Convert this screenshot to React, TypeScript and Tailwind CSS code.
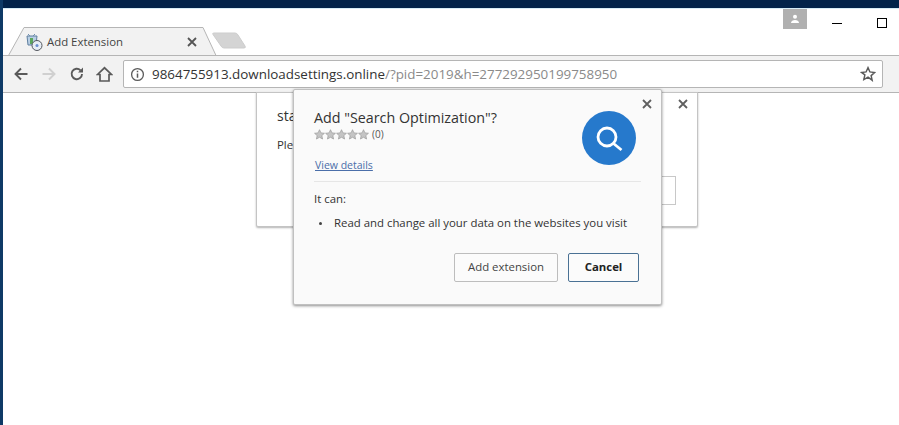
import React from 'react';

const font = "[font-family:'Open_Sans','Noto_Sans',sans-serif]";

const Star = () => (
  <svg width="11" height="11" viewBox="0 0 24 24">
    <path d="M12 1.500l3.200 7 7.600.8-5.700 5.100 1.600 7.500L12 18l-6.700 3.900 1.600-7.500L1.200 9.300l7.600-.8z" fill="#c4c4c4" stroke="#999" strokeWidth="1.500" />
  </svg>
);

const CloseIcon = ({ color = '#5f5f5f' }: { color?: string }) => (
  <svg width="10" height="10" viewBox="0 0 10 10">
    <path d="M1 1l8 8M9 1l-8 8" stroke={color} strokeWidth="1.800" />
  </svg>
);

const TabBar = () => (
  <div className="relative h-[47px] shrink-0 bg-white">
    {/* tab outline */}
    <svg width="250" height="30" viewBox="0 0 250 30" className="absolute left-[0px] top-[18px]">
      <path d="M-3 29.500H5.500L21 1.500H200L213 29.500" fill="#f2f2f2" stroke="#b5b5b5" />
      <path d="M210 8.500q-1-1.500 1-1.500h21q2 0 3 2l7 11q1 2-1 2h-20q-2 0-3-2z" fill="#d4d4d4" stroke="#cdcdcd" />
    </svg>
    <div className="absolute left-[22px] top-[26px] flex h-[16px] w-[173px] items-center">
      <svg width="18" height="18" viewBox="0 0 18 18" className="shrink-0">
        <path d="M2 3h10l-1 9H3z" fill="#b9cfe4" stroke="#5f7f9f" />
        <path d="M3 1l2 2M10 1L8 3" stroke="#6f8fb0" />
        <rect x="5" y="5" width="3" height="6" fill="#5ca65c" />
        <circle cx="12" cy="12.500" r="5" fill="#e8eef6" stroke="#53575e" />
        <circle cx="12" cy="12.500" r="1.500" fill="#6a8fd0" />
      </svg>
      <span className={`${font} ml-[4px] text-[11.400px] text-[#444]`}>Add Extension</span>
      <span className="ml-auto mr-[1px] flex"><CloseIcon color="#555" /></span>
    </div>

    {/* profile badge and window buttons */}
    <div className="absolute right-[0px] top-0 flex items-start">
      <div className="mr-[25px] flex h-[21px] w-[24px] items-center justify-center bg-[#b0b0b0]">
        <svg width="10" height="10" viewBox="0 0 10 10">
          <circle cx="5" cy="2.800" r="2" fill="#fff" />
          <path d="M1 9c0-2 2-3 4-3s4 1 4 3z" fill="#fff" />
        </svg>
      </div>
      <div className="mr-[35px] mt-[15px] h-[1px] w-[10px] bg-black" />
      <div className="mr-[12px] mt-[10px] h-[10px] w-[10px] border border-black" />
    </div>
  </div>
);

const Toolbar = () => (
  <div className="relative flex h-[38px] shrink-0 items-center border-y border-[#b5b5b5] bg-[#f2f2f2]">
    <div className="flex w-[120px] shrink-0 items-center">
      <svg width="16" height="16" viewBox="0 0 16 16" className="ml-[10px]">
        <path d="M14.500 8H2.500M8 2.500L2.500 8 8 13.500" fill="none" stroke="#5a5a5a" strokeWidth="1.900" />
      </svg>
      <svg width="16" height="16" viewBox="0 0 16 16" className="ml-[12px]">
        <path d="M1.500 8h12M8 2.500L13.500 8 8 13.500" fill="none" stroke="#d0d0d0" strokeWidth="1.900" />
      </svg>
      <svg width="16" height="16" viewBox="0 0 16 16" className="ml-[12px]">
        <path d="M13 8a5.200 5.200 0 1 1-1.500-3.700" fill="none" stroke="#5a5a5a" strokeWidth="1.900" />
        <path d="M14 1.500V6.500H9z" fill="#5a5a5a" />
      </svg>
      <svg width="17" height="17" viewBox="0 0 17 17" className="ml-[11px]">
        <path d="M1.500 8.500L8.500 1.800 15.500 8.500H13V15H4V8.500z" fill="none" stroke="#5a5a5a" strokeWidth="1.700" />
      </svg>
    </div>
    <div className={`${font} flex h-[28px] w-[760px] items-center rounded-[2px] border border-[#b5b5b5] bg-white text-[13.400px]`}>
      <svg width="15" height="15" viewBox="0 0 15 15" className="ml-[6px] shrink-0">
        <circle cx="7.500" cy="7.500" r="5.900" fill="none" stroke="#5a5a5a" strokeWidth="1.300" />
        <path d="M7.500 6.500v4.200M7.500 3.800v1.500" stroke="#5a5a5a" strokeWidth="1.500" />
      </svg>
      <span className="ml-[7px] text-[#333]">9864755913.downloadsettings.online</span>
      <span className="text-[#8a8a8a]">/?pid=2019&amp;h=277292950199758950</span>
      <svg width="16" height="16" viewBox="0 0 24 24" className="ml-auto mr-[6px]">
        <path d="M12 2.500l2.900 6.400 7 .8-5.200 4.700 1.500 6.900L12 16.800l-6.200 3.500 1.500-6.900L2.100 9.700l7-.8z" fill="none" stroke="#5a5a5a" strokeWidth="2.200" />
      </svg>
    </div>
  </div>
);

const BehindDialog = () => (
  <div className={`${font} absolute left-[253px] top-[-1px] flex h-[135px] w-[442px] flex-col rounded-b-[2px] border border-[#c4c4c4] bg-white pl-[20px] pt-[13px] text-[#333] shadow-[0_1px_2px_rgba(0,0,0,0.3)]`}>
    <span className="text-[14px] leading-[20px]">sta</span>
    <span className="mt-[11px] text-[11.400px] leading-[16px]">Ple</span>
    <div className="absolute right-[9px] top-[6px] flex"><CloseIcon /></div>
    <div className="absolute right-[21px] top-[83px] h-[29px] w-[60px] border border-[#c8c8c8]" />
  </div>
);

const Modal = () => (
  <div className={`${font} absolute left-[290px] top-[-4px] h-[216px] w-[369px] rounded-[2px] border border-[#c0c0c0] bg-[#fafafa] text-[#333] shadow-[0_1px_3px_rgba(0,0,0,0.45)]`}>
    <div className="absolute right-[9px] top-[9px] flex"><CloseIcon /></div>
    <div className="flex justify-between pl-[20px] pr-[25px]">
      <div className="pt-[17px]">
        <div className="text-[14.300px] leading-[21px] text-[#333]">Add "Search Optimization"?</div>
        <div className="flex items-center">
          <div className="flex"><Star /><Star /><Star /><Star /><Star /></div>
          <span className="ml-[3px] text-[10px] leading-[12px] text-[#555]">(0)</span>
        </div>
        <a className="ml-[1px] mt-[18px] block text-[10.500px] leading-[14px] text-[#4a6ea9] underline">View details</a>
      </div>
      <div className="mt-[21px] flex h-[54px] w-[54px] items-center justify-center rounded-full bg-[#2679cc]">
        <svg width="30" height="30" viewBox="0 0 30 30">
          <circle cx="13" cy="14" r="9" fill="none" stroke="#fff" strokeWidth="2.800" />
          <path d="M19.500 20.500l8 6.500" stroke="#fff" strokeWidth="2.800" />
        </svg>
      </div>
    </div>
    <div className="ml-[20px] mr-[20px] mt-[9px] h-[1px] bg-[#e6e6e6]" />
    <div className="ml-[20px] mt-[9px] text-[11.400px] leading-[16px]">It can:</div>
    <div className="ml-[25px] mt-[8px] flex items-center text-[11.400px] leading-[16px]">
      <span className="h-[3px] w-[3px] rounded-full bg-[#444]" />
      <span className="ml-[12px]">Read and change all your data on the websites you visit</span>
    </div>
    <div className="mr-[22px] mt-[22px] flex justify-end gap-[10px] text-[11.400px]">
      <button className="h-[29px] w-[104px] rounded-[2px] border border-[#bdbdbd] bg-[#fbfbfb] pb-[2px] text-[#444]">Add extension</button>
      <button className="h-[29px] w-[71px] rounded-[2px] border border-[#4a7194] bg-[#fbfbfb] pb-[2px] font-bold text-[#222]">Cancel</button>
    </div>
  </div>
);

export default function App() {
  return (
    <div className="flex h-[425px] w-[899px] flex-col overflow-hidden border-l-[3px] border-[#0e3a66] bg-white">
      <div className="relative z-10 -ml-[3px] h-[8px] shrink-0 bg-[#02234a] shadow-[0_1px_0_#d5ecf6]" />
      <TabBar />
      <Toolbar />
      <div className="relative flex-1 bg-white">
        <BehindDialog />
        <Modal />
      </div>
    </div>
  );
}
